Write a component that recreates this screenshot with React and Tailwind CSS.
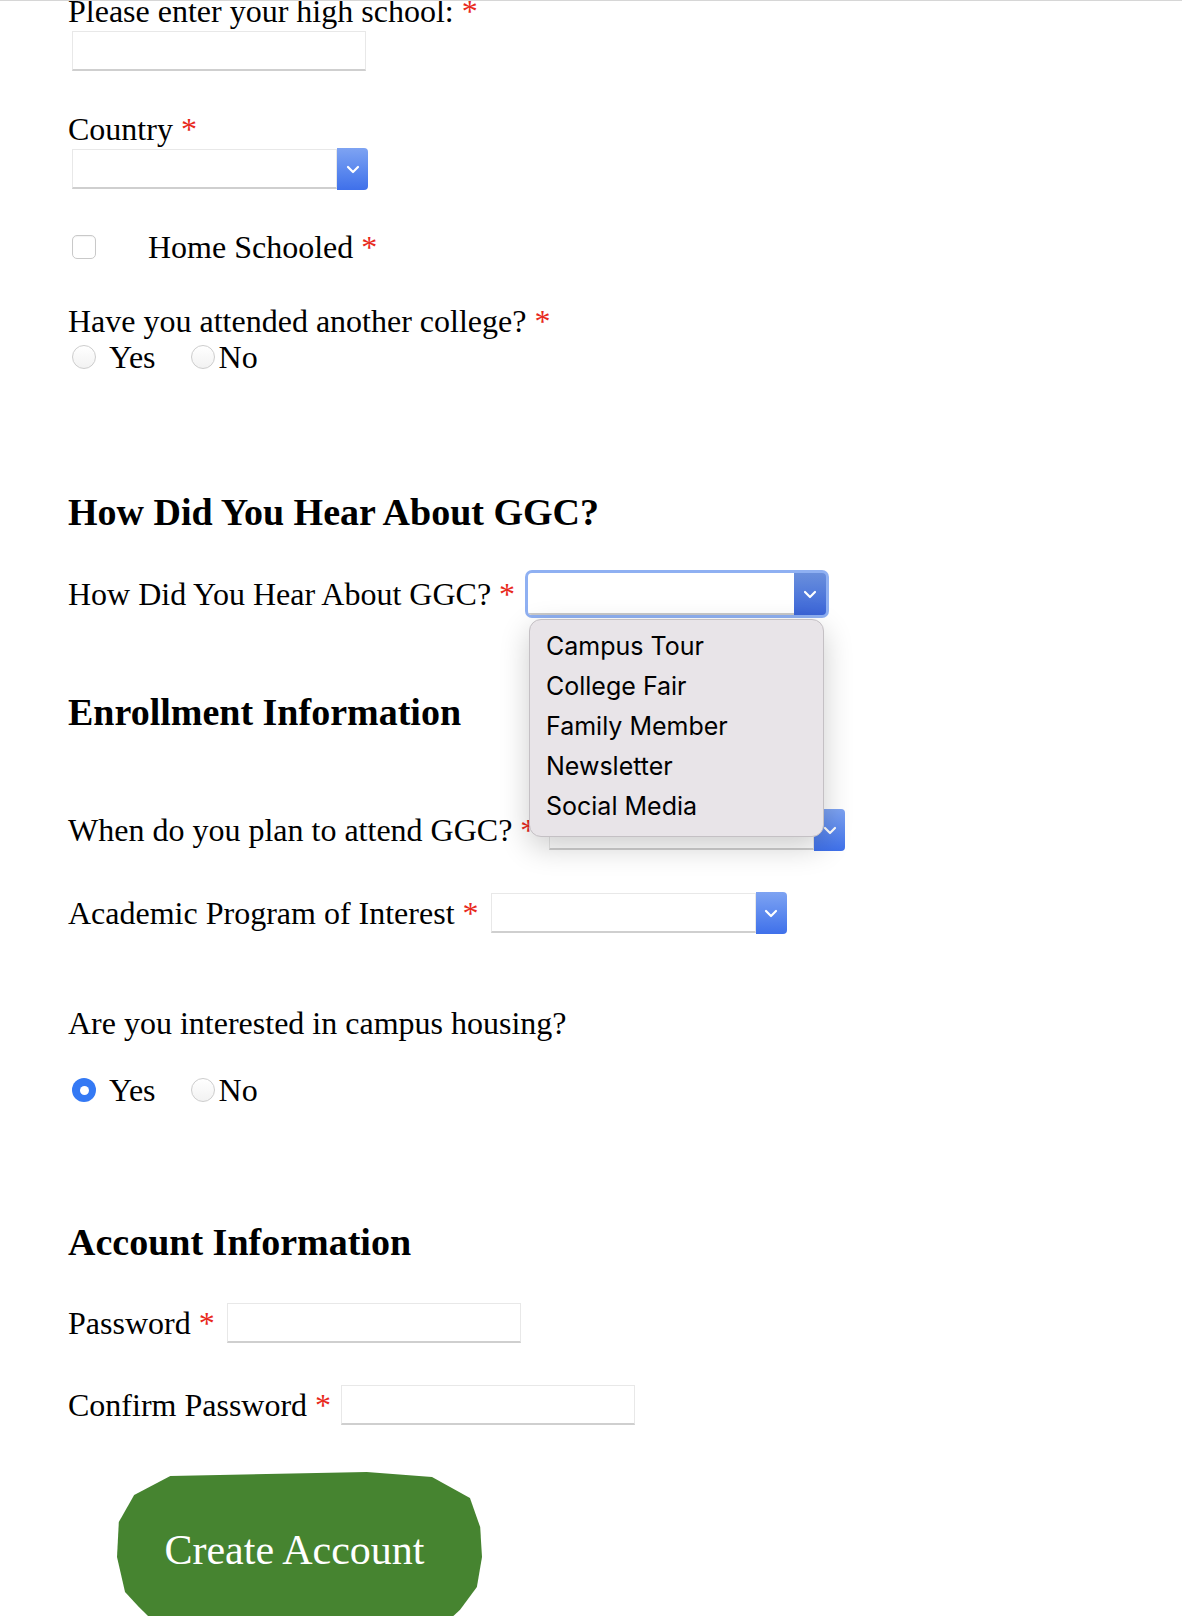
import { useState } from 'react'

const serif = { fontFamily: '"Liberation Serif", "Times New Roman", serif' }

function Star() {
  return <span className="text-[#e8291c] ml-[8px]">*</span>
}

function Chevron() {
  return (
    <svg width="14" height="9" viewBox="0 0 14 9" fill="none">
      <path d="M2 2 L7 7 L12 2" stroke="white" strokeWidth="2.2" strokeLinecap="round" strokeLinejoin="round" />
    </svg>
  )
}

function Select({ focused = false, className = '' }) {
  if (focused) {
    return (
      <div className={`rounded-[7px] bg-[#8fb0f2] p-[3px] ${className}`}>
        <div className="flex h-[42px] w-[298px] rounded-[4px] overflow-hidden">
          <div className="flex-1 bg-white border-b-2 border-[#c9c9c9]" />
          <div className="w-[32px] flex items-center justify-center bg-gradient-to-b from-[#6a8fdc] to-[#3b64d8]">
            <Chevron />
          </div>
        </div>
      </div>
    )
  }
  return (
    <div className={`flex items-center h-[42px] w-[296px] ${className}`}>
      <div className="flex-1 h-[40px] bg-white border border-[#e8e8e8] border-b-2 border-b-[#cfcfcf]" />
      <div className="w-[31px] h-[42px] rounded-r-[4px] flex items-center justify-center bg-gradient-to-b from-[#7ea3f2] to-[#3f70ea]">
        <Chevron />
      </div>
    </div>
  )
}

function TextInput({ className = '' }) {
  return <div className={`h-[40px] w-[294px] bg-white border border-[#e8e8e8] border-b-2 border-b-[#cfcfcf] ${className}`} />
}

function Radio({ checked }) {
  if (checked) {
    return (
      <span className="w-[24px] h-[24px] rounded-full bg-[#3479f4] flex items-center justify-center shrink-0">
        <span className="w-[9px] h-[9px] rounded-full bg-white" />
      </span>
    )
  }
  return <span className="w-[24px] h-[24px] rounded-full border border-[#cdcdcd] bg-gradient-to-b from-white to-[#f2f2f2] shrink-0" />
}

function RadioRow({ value, className = '' }) {
  return (
    <div className={`flex items-center h-[36px] ml-[4px] ${className}`}>
      <Radio checked={value === 'yes'} />
      <span className="ml-[13px]">Yes</span>
      <span className="ml-[35px]" />
      <Radio checked={value === 'no'} />
      <span className="ml-[4px]">No</span>
    </div>
  )
}

const options = ['Campus Tour', 'College Fair', 'Family Member', 'Newsletter', 'Social Media']

export default function App() {
  const [housing] = useState('yes')

  return (
    <div className="w-[1182px] h-[1616px] overflow-hidden bg-white border-t border-[#d6d6d6] text-black text-[32px] leading-[36px]" style={serif}>
      <div className="flex flex-col items-start pl-[68px]">
        {/* High school */}
        <div className="h-[36px] -mt-[8px]">Please enter your high school:<Star /></div>
        <TextInput className="mt-[2px] ml-[4px]" />

        {/* Country */}
        <div className="h-[36px] mt-[40px]">Country<Star /></div>
        <Select className="mt-[1px] ml-[4px]" />

        <div className="flex items-center h-[36px] mt-[39px] ml-[4px]">
          <span className="w-[24px] h-[24px] rounded-[5px] border border-[#c9c9c9] bg-white shadow-[inset_0_1px_1px_rgba(0,0,0,0.05)]" />
          <span className="ml-[52px]">Home Schooled<Star /></span>
        </div>

        <div className="h-[36px] mt-[38px]">Have you attended another college?<Star /></div>
        <RadioRow value="" />

        {/* How did you hear */}
        <h2 className="h-[44px] leading-[44px] mt-[115px] text-[38px] font-bold">How Did You Hear About GGC?</h2>
        <div className="relative flex items-center h-[48px] mt-[36px]">
          <span>How Did You Hear About GGC?<Star /></span>
          <Select focused className="ml-[10px]" />
          <div className="absolute left-[461px] top-[49px] z-10 w-[295px] h-[218px] rounded-[12px] border border-[#c4c0c4] bg-[#e8e4e8] shadow-[0_10px_30px_rgba(0,0,0,0.2)] pt-[6px] pl-[16px] text-[25px] leading-[40px] text-black" style={{ fontFamily: 'Inter, "Liberation Sans", sans-serif' }}>
            {options.map(o => (
              <div key={o}>{o}</div>
            ))}
          </div>
        </div>

        {/* Enrollment */}
        <h2 className="h-[44px] leading-[44px] mt-[72px] text-[38px] font-bold">Enrollment Information</h2>
        <div className="flex items-center h-[48px] mt-[72px]">
          <span>When do you plan to attend GGC?<Star /></span>
          <Select className="ml-[13px]" />
        </div>
        <div className="flex items-center h-[48px] mt-[35px]">
          <span>Academic Program of Interest<Star /></span>
          <Select className="ml-[12px]" />
        </div>

        <div className="h-[36px] mt-[68px]">Are you interested in campus housing?</div>
        <RadioRow value={housing} className="mt-[31px]" />

        {/* Account */}
        <h2 className="h-[44px] leading-[44px] mt-[112px] text-[38px] font-bold">Account Information</h2>
        <div className="flex items-center h-[48px] mt-[35px]">
          <span>Password<Star /></span>
          <TextInput className="ml-[12px]" />
        </div>
        <div className="flex items-center h-[48px] mt-[34px]">
          <span>Confirm Password<Star /></span>
          <TextInput className="ml-[10px]" />
        </div>

        <button
          type="button"
          className="mt-[43px] ml-[49px] w-[365px] h-[170px] bg-[#468430] text-white text-[42px] pb-[14px] pr-[10px] [clip-path:polygon(14.6%_2.4%,68.4%_0%,86.3%_2.9%,96.7%_15.3%,99.5%_32.4%,100%_50%,98.6%_67.6%,94%_81%,86%_97%,68%_100%,14.6%_97.6%,6%_79.4%,2.2%_70.6%,0%_50%,0.5%_29.4%,4.7%_13.5%)]"
        >
          Create Account
        </button>
      </div>
    </div>
  )
}
